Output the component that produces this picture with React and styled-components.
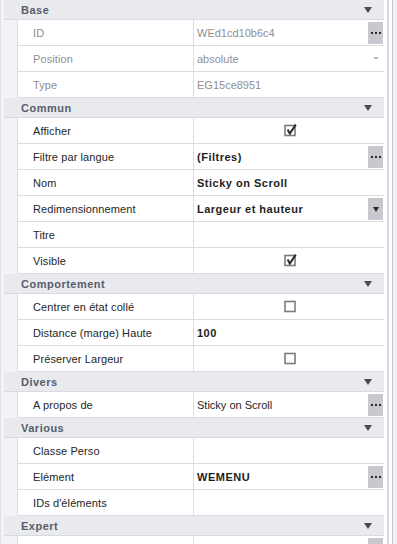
import React from "react";
import styled, { createGlobalStyle } from "styled-components";

const Global = createGlobalStyle`
  html, body { margin: 0; padding: 0; background: #f3f3f5; }
  body { font-family: "Liberation Sans", Arial, sans-serif; font-size: 11px; }
`;

const Frame = styled.div`
  display: flex;
  width: 397px;
  height: 544px;
  overflow: hidden;
  background: #f3f3f5;
`;

const Grid = styled.div`
  width: 384px;
  flex: none;
  display: flex;
  flex-direction: column;
  padding-left: 3px;
  box-sizing: border-box;
  border-left: 1px solid #e2e2e6;
`;

const Edge = styled.div`
  flex: 1;
  background: linear-gradient(
    to right,
    #ffffff 0 3px,
    #ddd6ea 3px 5px,
    #ffffff 5px 8px,
    #c9c9cf 8px 9px,
    #f1f1f3 9px 100%
  );
`;

const Header = styled.div`
  height: 19px;
  flex: none;
  display: flex;
  align-items: center;
  justify-content: space-between;
  background: #e9eaee;
  border-bottom: 1px solid #d9dadf;
  padding: 0 12px 0 17px;
  color: #565d6b;
  font-weight: bold;
  letter-spacing: 0.5px;
`;

const HeadArrow = styled.span`
  width: 0;
  height: 0;
  border-left: 4px solid transparent;
  border-right: 4px solid transparent;
  border-top: 6px solid #4a4d55;
`;

const Row = styled.div`
  height: 25px;
  flex: none;
  display: flex;
  margin-left: 13px;
  background: #ffffff;
  border-bottom: 1px solid #dcdcdf;
  border-left: 1px solid #dcdcdf;
`;

const Name = styled.div`
  width: 176px;
  flex: none;
  display: flex;
  align-items: center;
  padding-left: 15px;
  box-sizing: border-box;
  border-right: 1px solid #dcdcdf;
  color: ${(p) => (p.$dim ? "#8f8f93" : "#262626")};
  letter-spacing: 0.1px;
  white-space: nowrap;
`;

const Value = styled.div`
  flex: 1;
  display: flex;
  align-items: center;
  justify-content: ${(p) => (p.$center ? "center" : "flex-start")};
  padding-left: 3px;
  position: relative;
  color: ${(p) => (p.$dim ? "#8f8f93" : "#1e1e1e")};
  font-weight: ${(p) => (p.$bold ? "bold" : "normal")};
  letter-spacing: ${(p) => (p.$bold ? "0.5px" : "0")};
  white-space: nowrap;
`;

const SideButton = styled.div`
  position: absolute;
  right: 1px;
  top: 2px;
  bottom: 1px;
  width: 15px;
  background: #c8c9cf;
  display: flex;
  align-items: center;
  justify-content: center;
  gap: 2px;
`;

const Dot = styled.span`
  width: 2px;
  height: 2px;
  background: #2a2a2e;
`;

const SmallArrow = styled.span`
  width: 0;
  height: 0;
  border-left: 3px solid transparent;
  border-right: 3px solid transparent;
  border-top: ${(p) => (p.$light ? "3px solid #bdbdc2" : "5px solid #2a2a2e")};
`;

const LightArrowBox = styled.div`
  position: absolute;
  right: 5px;
  top: 0;
  bottom: 0;
  display: flex;
  align-items: center;
`;

const Check = ({ checked }) => (
  <svg width="13" height="13" viewBox="0 0 13 13">
    <rect x="1" y="1.5" width="10" height="10" fill="#fff" stroke="#7b7b80" strokeWidth="1.6" />
    {checked && (
      <path d="M3.6 5.6 L5.8 9.6 L11.8 0.6" fill="none" stroke="#2b2b30" strokeWidth="2" />
    )}
  </svg>
);

const Dots = () => (
  <SideButton>
    <Dot />
    <Dot />
    <Dot />
  </SideButton>
);

const sections = [
  {
    title: "Base",
    rows: [
      { name: "ID", value: "WEd1cd10b6c4", dim: true, dots: true },
      { name: "Position", value: "absolute", dim: true, light: true },
      { name: "Type", value: "EG15ce8951", dim: true },
    ],
  },
  {
    title: "Commun",
    rows: [
      { name: "Afficher", check: true, checked: true },
      { name: "Filtre par langue", value: "(Filtres)", bold: true, dots: true },
      { name: "Nom", value: "Sticky on Scroll", bold: true },
      { name: "Redimensionnement", value: "Largeur et hauteur", bold: true, combo: true },
      { name: "Titre", value: "" },
      { name: "Visible", check: true, checked: true },
    ],
  },
  {
    title: "Comportement",
    rows: [
      { name: "Centrer en état collé", check: true },
      { name: "Distance (marge) Haute", value: "100", bold: true },
      { name: "Préserver Largeur", check: true },
    ],
  },
  {
    title: "Divers",
    rows: [{ name: "A propos de", value: "Sticky on Scroll", dots: true }],
  },
  {
    title: "Various",
    rows: [
      { name: "Classe Perso", value: "" },
      { name: "Elément", value: "WEMENU", bold: true, dots: true },
      { name: "IDs d'éléments", value: "" },
    ],
  },
  {
    title: "Expert",
    rows: [{ name: "", value: "", dots: true }],
  },
];

export default function App() {
  return (
    <>
      <Global />
      <Frame>
        <Grid>
          {sections.map((s) => (
            <React.Fragment key={s.title}>
              <Header>
                <span>{s.title}</span>
                <HeadArrow />
              </Header>
              {s.rows.map((r, i) => (
                <Row key={i}>
                  <Name $dim={r.dim}>{r.name}</Name>
                  <Value $dim={r.dim} $bold={r.bold} $center={r.check}>
                    {r.check ? <Check checked={r.checked} /> : r.value}
                    {r.dots && <Dots />}
                    {r.combo && (
                      <SideButton>
                        <SmallArrow />
                      </SideButton>
                    )}
                    {r.light && (
                      <LightArrowBox>
                        <SmallArrow $light />
                      </LightArrowBox>
                    )}
                  </Value>
                </Row>
              ))}
            </React.Fragment>
          ))}
        </Grid>
        <Edge />
      </Frame>
    </>
  );
}
